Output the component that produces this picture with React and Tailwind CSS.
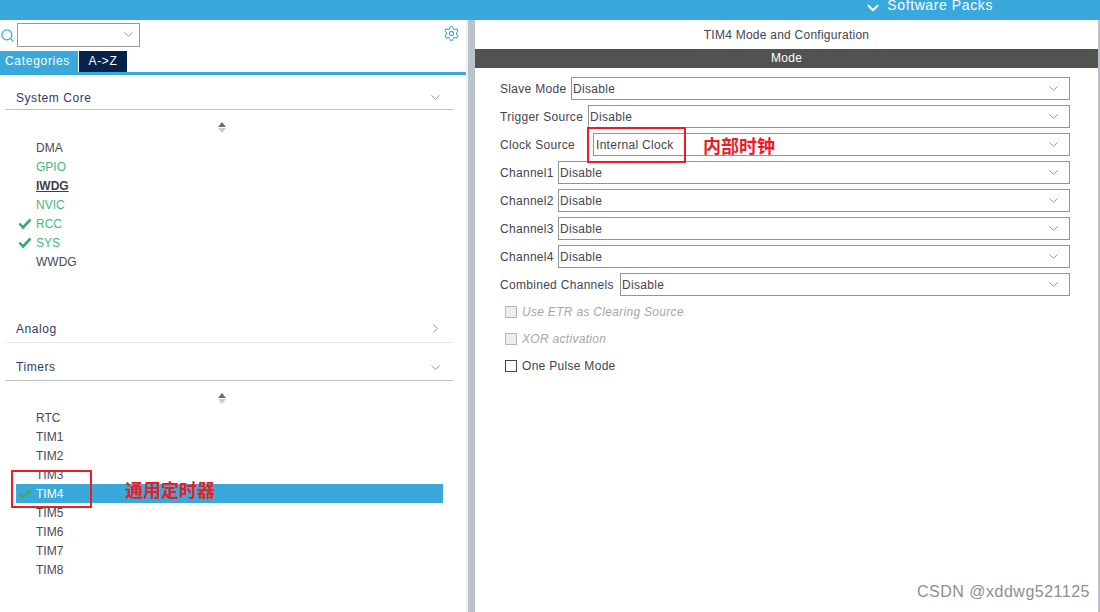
import React from "react";
import { ChevronDown, ChevronRight, Search, Settings } from "lucide-react";

const coreItems = [
  { name: "DMA", cls: "text-[#4a4a55]" },
  { name: "GPIO", cls: "text-[#45b87a]" },
  { name: "IWDG", cls: "text-[#3f3f4a] font-bold underline" },
  { name: "NVIC", cls: "text-[#45b87a]" },
  { name: "RCC", cls: "text-[#45b87a]", done: true },
  { name: "SYS", cls: "text-[#45b87a]", done: true },
  { name: "WWDG", cls: "text-[#4a4a55]" },
];

const timerItems = ["RTC", "TIM1", "TIM2", "TIM3", "TIM4", "TIM5", "TIM6", "TIM7", "TIM8"];

const modeRows = [
  { label: "Slave Mode", labelCls: "w-[71px]", value: "Disable" },
  { label: "Trigger Source", labelCls: "w-[88px]", value: "Disable" },
  { label: "Clock Source", labelCls: "w-[93px]", value: "Internal Clock", boxed: true },
  { label: "Channel1", labelCls: "w-[58px]", value: "Disable" },
  { label: "Channel2", labelCls: "w-[58px]", value: "Disable" },
  { label: "Channel3", labelCls: "w-[58px]", value: "Disable" },
  { label: "Channel4", labelCls: "w-[58px]", value: "Disable" },
  { label: "Combined Channels", labelCls: "w-[120px]", value: "Disable" },
];

const Check = ({ className }) => (
  <svg viewBox="0 0 14 12" className={className}>
    <path d="M1.5 5.5 L5 9.5 L12.5 1.5" fill="none" stroke="#3fa96b" strokeWidth="2.6" />
  </svg>
);

const SortArrows = () => (
  <div className="h-[18px] flex flex-col items-center justify-center gap-[1px] mr-[22px]">
    <div className="w-0 h-0 border-x-[4px] border-x-transparent border-b-[5px] border-b-[#6b6f72]" />
    <div className="w-0 h-0 border-x-[4px] border-x-transparent border-t-[5px] border-t-[#c9cccf]" />
  </div>
);

const SectionHeader = ({ title, open = true, className }) => (
  <div className={`flex items-center justify-between ml-[5px] w-[448px] pl-[11px] pr-[10px] border-b border-[#b9c0c4] ${className}`}>
    <span className="text-[12px] tracking-[0.55px] text-[#2f3a66]">{title}</span>
    {open ? (
      <ChevronDown size={15} strokeWidth={1} className="text-[#555]" />
    ) : (
      <ChevronRight size={15} strokeWidth={1} className="text-[#555]" />
    )}
  </div>
);

const ListRow = ({ name, cls, done, selected }) => (
  <div className={`h-[19px] ml-[16px] w-[427px] flex items-center relative text-[12px] ${selected ? "bg-[#39a9dc]" : ""}`}>
    {done && <Check className="absolute left-[2px] top-[4px] w-[14px] h-[12px]" />}
    <span className={`ml-[20px] ${cls}`}>{name}</span>
  </div>
);

const SelectBox = ({ value, boxed }) => (
  <div className="flex-1 h-[23px] border border-[#8f959a] flex items-center justify-between pl-[1px] pr-[8px] bg-white">
    <span className={`text-[12px] tracking-[0.3px] text-[#44444e] ${boxed ? "ml-[1px]" : ""}`}>{value}</span>
    <ChevronDown size={15} strokeWidth={1} className="text-[#555]" />
  </div>
);

const CheckOption = ({ label, disabled }) => (
  <div className="h-[27px] flex items-center pl-[5px]">
    <div className={`w-[12px] h-[12px] border ${disabled ? "border-[#b5b8ba] bg-[#eeeeee]" : "border-[#44474a] bg-white"}`} />
    <span className={`ml-[5px] text-[12px] tracking-[0.3px] ${disabled ? "italic text-[#a4a6a8]" : "text-[#44444e]"}`}>{label}</span>
  </div>
);

export default function App() {
  return (
    <div className="w-[1100px] h-[612px] relative overflow-hidden bg-white flex flex-col font-['Liberation_Sans','Noto_Sans_CJK_SC',sans-serif]">
      {/* top strip, the label is cut off by the window edge */}
      <div className="h-[20px] shrink-0 bg-[#39a9dc] flex justify-end items-end overflow-hidden pr-[107px] text-white">
        <ChevronDown size={18} strokeWidth={2.5} className="mb-[3px] mr-[5px]" />
        <span className="text-[14px] tracking-[0.6px] leading-[16px] mb-[7px]">Software Packs</span>
      </div>

      <div className="flex-1 flex min-h-0">
        {/* left tree panel */}
        <div className="w-[466px] shrink-0 flex flex-col">
          <div className="h-[31px] flex items-center">
            <Search size={15} strokeWidth={2} className="text-[#39a9dc] ml-[0px] mb-[1px]" />
            <div className="ml-[2px] w-[123px] h-[24px] border border-[#999] flex items-center justify-end pr-[3px] mt-[-2px]">
              <ChevronDown size={15} strokeWidth={1} className="text-[#555]" />
            </div>
            <Settings size={17} strokeWidth={1.5} className="text-[#39a9dc] ml-[303px] mt-[-4px]" />
          </div>
          <div className="h-[21px] flex text-white text-[12px] tracking-[0.7px]">
            <div className="w-[78px] bg-[#39a9dc] pl-[5px] leading-[21px]">Categories</div>
            <div className="w-[48px] ml-[1px] bg-[#03234b] text-center leading-[21px]">A-&gt;Z</div>
          </div>
          <div className="h-[3px] bg-[#39a9dc]" />

          <SectionHeader title="System Core" className="h-[35px] pt-[11px]" />
          <div className="h-[26px] flex justify-center items-end"><SortArrows /></div>
          <div className="mt-[2px]">
            {coreItems.map((item) => (
              <ListRow key={item.name} {...item} />
            ))}
          </div>

          <SectionHeader title="Analog" open={false} className="h-[39px] mt-[33px] pt-[11px] border-[#e4e7e8]" />
          <SectionHeader title="Timers" className="h-[38px] pt-[11px]" />
          <div className="h-[26px] flex justify-center items-end"><SortArrows /></div>
          <div className="mt-[1px]">
            {timerItems.map((name) => (
              <ListRow
                key={name}
                name={name}
                done={name === "TIM4"}
                selected={name === "TIM4"}
                cls={name === "TIM4" ? "text-white" : "text-[#4a4a55]"}
              />
            ))}
          </div>
        </div>

        {/* splitter */}
        <div className="w-[9px] shrink-0 bg-[#b8c4ca] border-l-[2px] border-[#eef1f2]" />

        {/* mode panel */}
        <div className="flex-1 flex flex-col min-w-0">
          <div className="h-[29px] pt-[1px] flex items-center justify-center text-[12px] tracking-[0.25px] text-[#44444e]">
            TIM4 Mode and Configuration
          </div>
          <div className="h-[19px] bg-[#515351] text-white text-[12px] text-center leading-[19px] tracking-[0.3px]">Mode</div>
          <div className="mt-[9px] ml-[25px] w-[570px] flex flex-col gap-[5px]">
            {modeRows.map((row) => (
              <div key={row.label} className="flex items-center">
                <span className={`${row.labelCls} shrink-0 text-[12px] tracking-[0.3px] text-[#44444e] whitespace-nowrap`}>{row.label}</span>
                <SelectBox value={row.value} boxed={row.boxed} />
              </div>
            ))}
          </div>
          <div className="mt-[2px] ml-[25px] flex flex-col">
            <CheckOption label="Use ETR as Clearing Source" disabled />
            <CheckOption label="XOR activation" disabled />
            <CheckOption label="One Pulse Mode" />
          </div>
        </div>

        {/* scrollbar sliver at the far edge */}
        <div className="w-[2px] shrink-0 bg-[#b8c4ca]" />
      </div>

      {/* red callouts */}
      <div className="absolute left-[587px] top-[127px] w-[99px] h-[36px] border-2 border-[#ed1c24]" />
      <div className="absolute left-[703px] top-[134px] text-[18px] leading-[22px] font-bold text-[#ed1c24] font-['Noto_Sans_CJK_SC',sans-serif]">内部时钟</div>
      <div className="absolute left-[11px] top-[470px] w-[81px] h-[38px] border-2 border-[#ed1c24]" />
      <div className="absolute left-[125px] top-[478px] text-[18px] leading-[22px] font-bold text-[#ed1c24] font-['Noto_Sans_CJK_SC',sans-serif]">通用定时器</div>

      {/* watermark */}
      <div className="absolute left-[917px] top-[583px] text-[16px] leading-[18px] tracking-[0.5px] text-[#8e8e8e]">CSDN @xddwg521125</div>
    </div>
  );
}
